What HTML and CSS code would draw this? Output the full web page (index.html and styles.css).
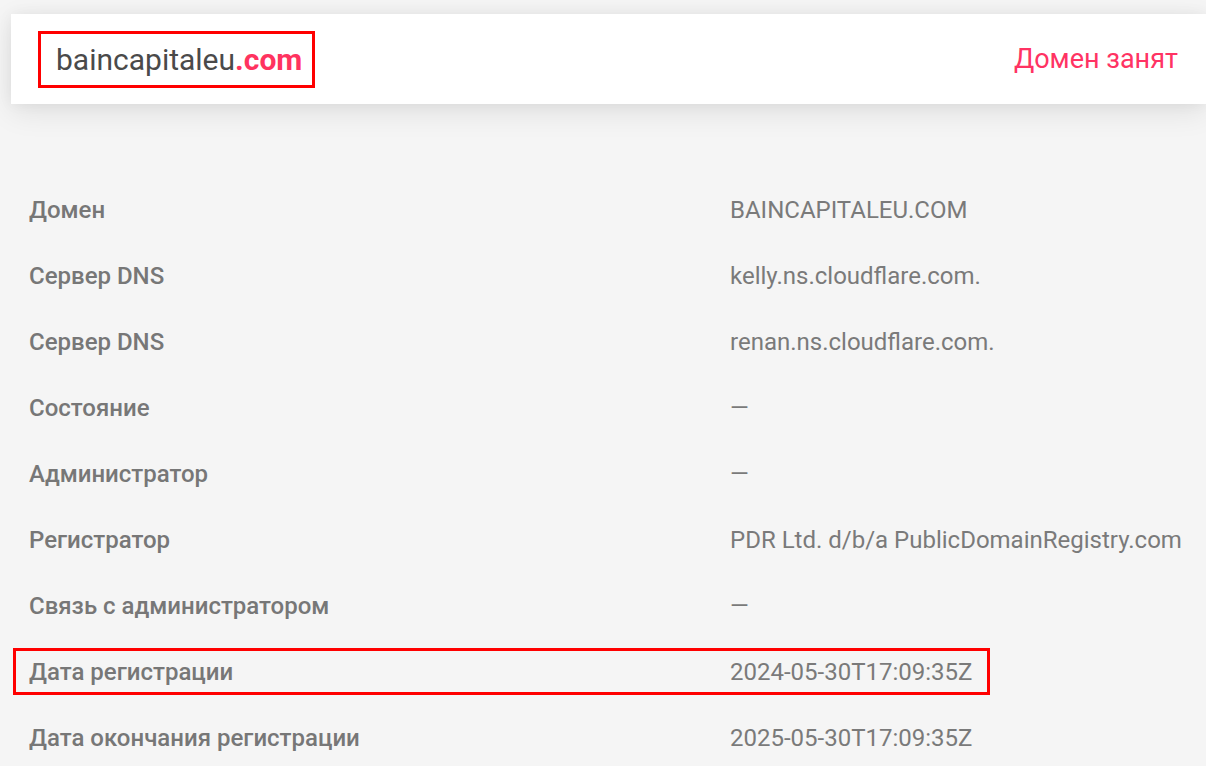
FILE: index.html
```html
<!DOCTYPE html>
<html lang="ru">
<head>
<meta charset="utf-8">
<link rel="stylesheet" href="styles.css">
</head>
<body>
<div class="page">
  <header class="card">
    <span class="domain"><span class="name">baincapitaleu</span><span class="tld">.com</span></span>
    <span class="status">Домен занят</span>
  </header>
  <div class="table">
    <div class="row"><div class="label">Домен</div><div class="value">BAINCAPITALEU.COM</div></div>
    <div class="row"><div class="label">Сервер DNS</div><div class="value">kelly.ns.cloudflare.com.</div></div>
    <div class="row"><div class="label">Сервер DNS</div><div class="value">renan.ns.cloudflare.com.</div></div>
    <div class="row"><div class="label">Состояние</div><div class="value">—</div></div>
    <div class="row"><div class="label">Администратор</div><div class="value">—</div></div>
    <div class="row"><div class="label">Регистратор</div><div class="value">PDR Ltd. d/b/a PublicDomainRegistry.com</div></div>
    <div class="row"><div class="label">Связь с администратором</div><div class="value">—</div></div>
    <div class="row marked"><div class="label">Дата регистрации</div><div class="value">2024-05-30T17:09:35Z</div></div>
    <div class="row"><div class="label">Дата окончания регистрации</div><div class="value">2025-05-30T17:09:35Z</div></div>
  </div>
</div>
</body>
</html>
```
FILE: styles.css
```css
html, body {
  margin: 0;
  padding: 0;
  background: #f5f5f5;
  overflow: hidden;
}
body {
  font-family: Roboto, "Noto Sans", sans-serif;
  width: 1206px;
  height: 766px;
}
.page {
  padding: 14px 0 0 11px;
}
.card {
  background: #fff;
  height: 90px;
  box-sizing: border-box;
  display: flex;
  align-items: center;
  justify-content: space-between;
  padding: 0 28px 0 27px;
  box-shadow: 0 8px 28px rgba(0, 0, 0, 0.09), 0 0 14px rgba(0, 0, 0, 0.05);
}
.domain {
  border: 3px solid #ff0000;
  padding: 8px 10px 8px 15px;
  font-size: 30px;
  line-height: 35px;
}
.name { color: #4a4a4a; }
.tld { color: #ff335f; font-weight: 700; }
.status {
  color: #ff3363;
  font-size: 27px;
}
.table {
  margin-top: 73px;
  padding-left: 18px;
}
.row {
  position: relative;
  display: flex;
  align-items: center;
  height: 66px;
  font-size: 24px;
}
.label {
  width: 701px;
  color: #777777;
  font-weight: 500;
}
.value {
  color: #7a7a7a;
}
.marked::after {
  content: "";
  position: absolute;
  left: -16px;
  width: 971px;
  top: 9px;
  bottom: 10px;
  border: 3px solid #ff0000;
}
```
